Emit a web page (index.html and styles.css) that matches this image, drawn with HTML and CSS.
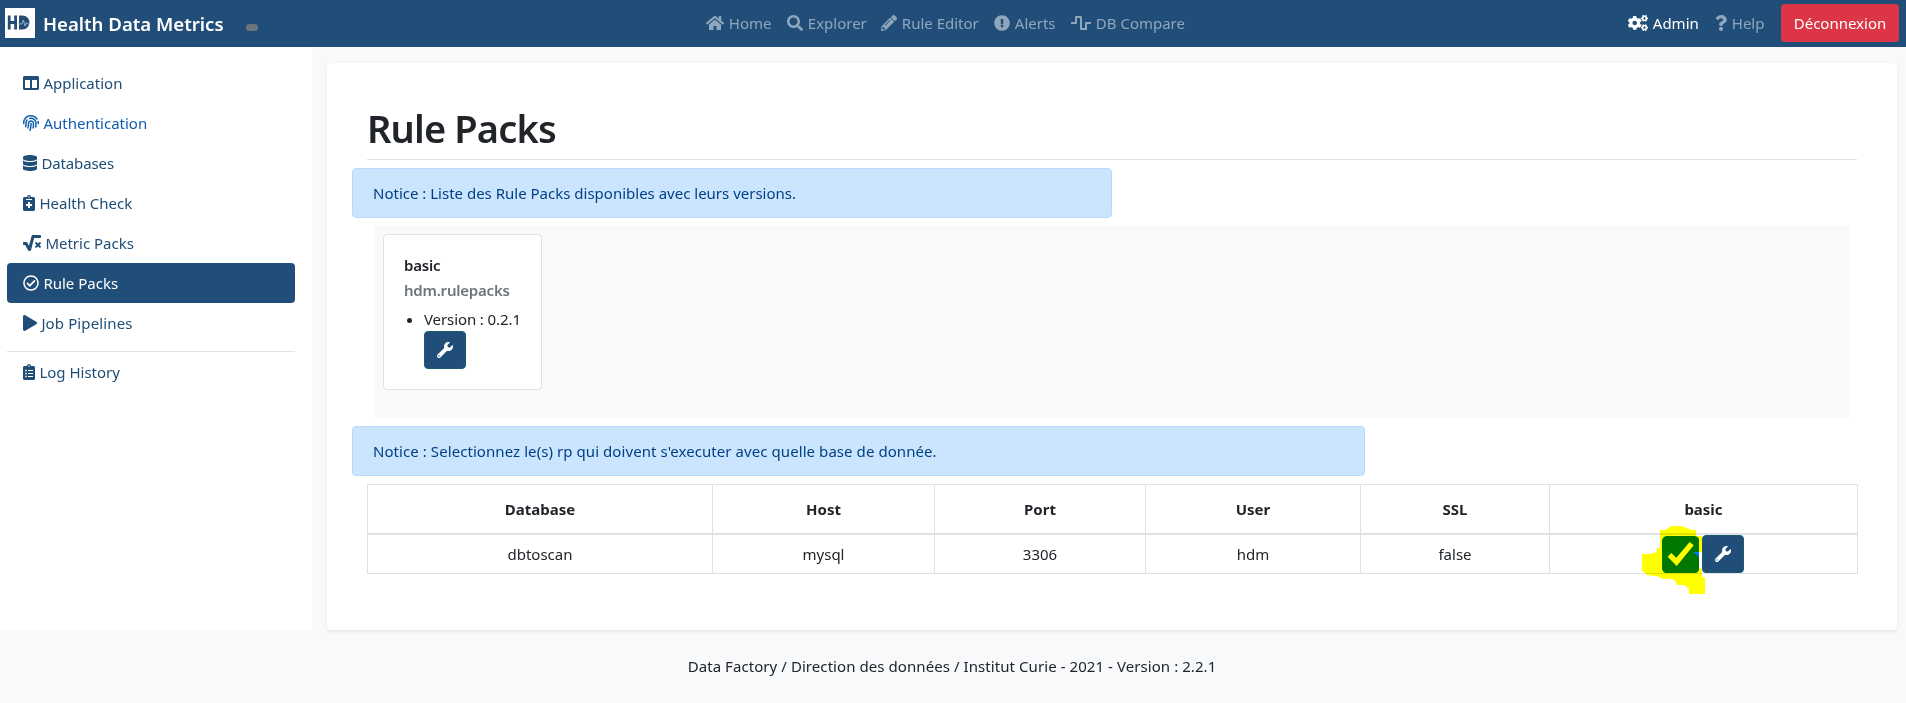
FILE: index.html
```html
<!DOCTYPE html>
<html lang="fr">
<head>
<meta charset="utf-8">
<title>Health Data Metrics</title>
<link rel="stylesheet" href="styles.css">
</head>
<body>
<header class="navbar">
  <div class="brand">
    <svg class="logo" viewBox="0 0 30 30"><rect width="30" height="30" fill="#fff"/><circle cx="17" cy="14.5" r="10.5" fill="none" stroke="#f3f4f6"/><path d="M4.200 7.500v14M10.600 7.500v14M4.200 14.500h6.400" fill="none" stroke="#274c72" stroke-width="2.800"/><path d="M14 7.500h3.500a7 7 0 0 1 0 14H14z" fill="#274c72"/><path d="M13 16h4l1.300-4 1.800 6 1.400-3.500 1.200 1.500h1.500" fill="none" stroke="#8fb0cc" stroke-width="1"/></svg>
    <span class="brand-name">Health Data Metrics</span>
    <span class="badge"></span>
  </div>
  <nav class="nav-main">
    <a class="nav-link w-home"><svg class="icon i18" viewBox="0 0 576 512"><path d="M280.37 148.26L96 300.11V464a16 16 0 0 0 16 16l112.06-.29a16 16 0 0 0 15.92-16V368a16 16 0 0 1 16-16h64a16 16 0 0 1 16 16v95.64a16 16 0 0 0 16 16.05L464 480a16 16 0 0 0 16-16V300L295.67 148.26a12.19 12.19 0 0 0-15.3 0zM571.6 251.47L488 182.56V44.05a12 12 0 0 0-12-12h-56a12 12 0 0 0-12 12v72.61L318.47 43a48 48 0 0 0-61 0L4.34 251.47a12 12 0 0 0-1.6 16.9l25.5 31A12 12 0 0 0 45.15 301l235.22-193.74a12.19 12.19 0 0 1 15.3 0L530.9 301a12 12 0 0 0 16.9-1.6l25.5-31a12 12 0 0 0-1.7-16.93z"/></svg><span>Home</span></a>
    <a class="nav-link w-explorer"><svg class="icon" viewBox="0 0 512 512"><path d="M505 442.7L405.3 343c-4.5-4.5-10.6-7-17-7H372c27.6-35.3 44-79.7 44-128C416 93.1 322.9 0 208 0S0 93.1 0 208s93.1 208 208 208c48.3 0 92.7-16.4 128-44v16.3c0 6.4 2.5 12.5 7 17l99.7 99.7c9.4 9.4 24.6 9.4 33.9 0l28.3-28.3c9.4-9.4 9.4-24.6.1-34zM208 336c-70.7 0-128-57.2-128-128 0-70.7 57.2-128 128-128 70.7 0 128 57.2 128 128 0 70.7-57.2 128-128 128z"/></svg><span>Explorer</span></a>
    <a class="nav-link w-rule"><svg class="icon" viewBox="0 0 512 512"><path d="M497.9 142.1l-46.1 46.1c-4.7 4.7-12.3 4.7-17 0l-111-111c-4.7-4.7-4.7-12.3 0-17l46.1-46.1c18.7-18.7 49.1-18.7 67.9 0l60.1 60.1c18.8 18.7 18.8 49.1 0 67.9zM284.2 99.8L21.6 362.4.4 483.9c-2.9 16.4 11.4 30.6 27.8 27.8l121.5-21.3 262.6-262.6c4.7-4.7 4.7-12.3 0-17l-111-111c-4.8-4.7-12.4-4.7-17.1 0zM124.1 339.9c-5.5-5.5-5.5-14.3 0-19.8l154-154c5.5-5.5 14.3-5.5 19.8 0s5.500 14.300 0 19.800l-154 154c-5.500 5.500-14.300 5.500-19.800 0zM88 424h48v36.300l-64.500 11.300-31.100-31.100L51.700 376H88v48z"/></svg><span>Rule Editor</span></a>
    <a class="nav-link w-alerts"><svg class="icon" viewBox="0 0 512 512"><path d="M504 256c0 136.997-111.043 248-248 248S8 392.997 8 256C8 119.083 119.043 8 256 8s248 111.083 248 248zm-248 50c-25.405 0-46 20.595-46 46s20.595 46 46 46 46-20.595 46-46-20.595-46-46-46zm-43.673-165.346l7.418 136c.347 6.364 5.609 11.346 11.982 11.346h48.546c6.373 0 11.635-4.982 11.982-11.346l7.418-136c.375-6.874-5.098-12.654-11.982-12.654h-63.383c-6.884 0-12.356 5.78-11.981 12.654z"/></svg><span>Alerts</span></a>
    <a class="nav-link w-compare"><svg class="icon i20" viewBox="0 0 640 512"><path d="M476 480H324a36 36 0 0 1-36-36V96h-96v156a36 36 0 0 1-36 36H16a16 16 0 0 1-16-16v-32a16 16 0 0 1 16-16h112V68a36 36 0 0 1 36-36h152a36 36 0 0 1 36 36v348h96V260a36 36 0 0 1 36-36h140a16 16 0 0 1 16 16v32a16 16 0 0 1-16 16H512v156a36 36 0 0 1-36 36z"/></svg><span>DB Compare</span></a>
  </nav>
  <div class="nav-right">
    <a class="nav-link active w-admin"><svg class="icon i20" viewBox="0 0 640 512"><defs><path id="cog" d="M512.1 191l-8.2 14.3c-3 5.3-9.4 7.5-15.1 5.4-11.8-4.4-22.6-10.7-32.1-18.6-4.6-3.8-5.8-10.5-2.8-15.7l8.2-14.3c-6.9-8-12.3-17.3-15.9-27.4h-16.5c-6 0-11.2-4.3-12.2-10.3-2-12-2.1-24.6 0-37.1 1-6 6.2-10.4 12.2-10.4h16.500c3.600-10.100 9-19.400 15.900-27.400l-8.200-14.300c-3-5.200-1.900-11.900 2.800-15.700 9.500-7.900 20.400-14.200 32.100-18.600 5.700-2.100 12.100.1 15.100 5.400l8.200 14.300c10.500-1.900 21.200-1.900 31.700 0L552 6.300c3-5.300 9.400-7.500 15.100-5.400 11.800 4.400 22.600 10.700 32.100 18.600 4.600 3.800 5.800 10.500 2.800 15.700l-8.200 14.300c6.900 8 12.300 17.300 15.900 27.400h16.500c6 0 11.200 4.300 12.200 10.300 2 12 2.100 24.600 0 37.100-1 6-6.200 10.400-12.200 10.400h-16.500c-3.600 10.100-9 19.400-15.900 27.400l8.200 14.300c3 5.200 1.900 11.900-2.800 15.700-9.500 7.900-20.400 14.200-32.100 18.600-5.700 2.100-12.100-.1-15.100-5.400l-8.200-14.300c-10.400 1.900-21.200 1.900-31.700 0zm-10.500-58.800c38.500 29.600 82.400-14.300 52.800-52.800-38.500-29.700-82.400 14.300-52.800 52.800z"/></defs><use href="#cog"/><use href="#cog" y="299"/><path d="M386.3 286.1l33.7 16.8c10.1 5.8 14.5 18.1 10.5 29.1-8.9 24.2-26.4 46.400-42.600 65.800-7.400 8.900-20.200 11.100-30.300 5.300l-29.100-16.800c-16 13.700-34.600 24.600-54.900 31.700v33.600c0 11.600-8.300 21.600-19.700 23.600-24.600 4.200-50.400 4.400-75.900 0-11.500-2-20-11.900-20-23.600V418c-20.300-7.200-38.900-18-54.900-31.700L74 403c-10 5.800-22.900 3.600-30.300-5.300-16.200-19.400-33.300-41.600-42.200-65.700-4-10.900.4-23.200 10.500-29.100l33.300-16.800c-3.900-20.900-3.900-42.400 0-63.400L12 205.800c-10.100-5.800-14.600-18.100-10.500-29 8.900-24.200 26-46.400 42.200-65.800 7.400-8.900 20.200-11.100 30.300-5.300l29.100 16.800c16-13.700 34.600-24.600 54.900-31.700V57.100c0-11.500 8.200-21.500 19.600-23.500 24.600-4.200 50.500-4.400 76-.1 11.500 2 20 11.900 20 23.600v33.600c20.300 7.200 38.900 18 54.900 31.700l29.100-16.800c10-5.800 22.900-3.600 30.300 5.300 16.200 19.400 33.200 41.600 42.100 65.800 4 10.900.1 23.200-10 29.100l-33.700 16.800c3.900 21 3.900 42.500 0 63.500zm-117.600 21.100c59.200-77-28.700-164.900-105.700-105.700-59.200 77 28.700 164.900 105.700 105.700z"/></svg><span>Admin</span></a>
    <a class="nav-link w-help"><svg class="icon i12" viewBox="0 0 384 512"><path d="M202.021 0C122.202 0 70.503 32.703 29.914 91.026c-7.363 10.58-5.093 25.086 5.178 32.874l43.138 32.709c10.373 7.865 25.132 6.026 33.253-4.148 25.049-31.381 43.63-49.449 82.757-49.449 30.764 0 68.816 19.799 68.816 49.631 0 22.552-18.617 34.134-48.993 51.164-35.423 19.86-82.299 44.576-82.299 106.405V320c0 13.255 10.745 24 24 24h72.471c13.255 0 24-10.745 24-24v-5.773c0-42.86 125.268-44.645 125.268-160.627C377.504 66.256 286.902 0 202.021 0zM192 373.459c-38.196 0-69.271 31.075-69.271 69.271 0 38.195 31.075 69.27 69.271 69.27s69.271-31.075 69.271-69.271-31.075-69.27-69.271-69.27z"/></svg><span>Help</span></a>
    <a class="btn-logout">Déconnexion</a>
  </div>
</header>
<div class="layout">
  <aside class="sidebar">
    <a class="side-link"><svg class="icon" viewBox="0 0 512 512"><path d="M464 32H48C21.49 32 0 53.49 0 80v352c0 26.51 21.49 48 48 48h416c26.51 0 48-21.49 48-48V80c0-26.51-21.49-48-48-48zM224 416H64V160h160v256zm224 0H288V160h160v256z"/></svg><span>Application</span></a>
    <a class="side-link hover"><svg class="icon" viewBox="0 0 512 512"><path d="M256.12 245.96c-13.25 0-24 10.74-24 24 1.14 72.25-8.14 141.9-27.7 211.55-2.73 9.72 2.15 30.49 23.12 30.49 10.48 0 20.11-6.92 23.09-17.52 13.53-47.91 31.04-125.41 29.48-224.52.01-13.25-10.73-24-23.99-24zm-.86-81.73C194 164.16 151.25 211.3 152.1 265.32c.75 47.94-3.75 95.91-13.37 142.55-2.69 12.98 5.67 25.69 18.64 28.36 13.05 2.67 25.67-5.66 28.36-18.64 10.34-50.09 15.17-101.58 14.37-153.02-.41-25.95 19.92-52.49 54.45-52.34 31.31.47 57.15 25.34 57.62 55.47.77 48.05-2.81 96.33-10.61 143.55-2.17 13.06 6.69 25.42 19.76 27.58 19.97 3.33 26.81-15.1 27.58-19.77 8.28-50.03 12.06-101.21 11.27-152.11-.88-55.8-47.94-101.88-104.91-102.72zm-110.69-19.78c-10.3-8.34-25.37-6.8-33.76 3.48-25.62 31.5-39.39 71.28-38.75 112 .59 37.58-2.47 75.27-9.11 112.05-2.34 13.05 6.31 25.53 19.36 27.89 20.11 3.5 27.07-14.81 27.89-19.36 7.19-39.84 10.5-80.66 9.86-121.33-.47-29.88 9.2-57.88 28-80.97 8.35-10.28 6.79-25.39-3.49-33.76zm109.47-62.33c-15.41-.41-30.87 1.44-45.78 4.97-12.89 3.06-20.87 15.98-17.83 28.89 3.06 12.89 16 20.83 28.89 17.83 11.05-2.61 22.47-3.77 34-3.69 75.43 1.13 137.73 61.5 138.88 134.58.59 37.88-1.28 76.11-5.58 113.63-1.5 13.17 7.95 25.08 21.11 26.58 16.72 1.95 25.51-11.88 26.58-21.11a929.06 929.06 0 0 0 5.89-119.85c-1.56-98.75-85.07-180.33-186.16-181.83zm252.07 121.45c-2.86-12.92-15.51-21.2-28.61-18.27-12.94 2.86-21.12 15.66-18.26 28.61 4.71 21.41 4.91 37.41 4.7 61.6-.11 13.27 10.55 24.09 23.8 24.2h.2c13.17 0 23.89-10.61 24-23.8.18-22.18.4-44.11-5.83-72.34zm-40.12-90.72C417.29 43.46 337.6 1.29 252.81.02 183.02-.82 118.47 24.91 70.46 72.94 24.09 119.37-.9 181.04.14 246.65l-.12 21.47c-.39 13.25 10.03 24.31 23.28 24.69.23.02.48.02.72.02 12.92 0 23.59-10.3 23.97-23.3l.16-23.64c-.83-52.5 19.16-101.86 56.28-139 38.76-38.8 91.34-59.67 147.68-58.86 69.45 1.03 134.73 35.56 174.62 92.39 7.61 10.86 22.56 13.45 33.42 5.86 10.84-7.62 13.46-22.59 5.84-33.43z"/></svg><span>Authentication</span></a>
    <a class="side-link"><svg class="icon i14" viewBox="0 0 448 512"><path d="M448 73.143v45.714C448 159.143 347.667 192 224 192S0 159.143 0 118.857V73.143C0 32.857 100.333 0 224 0s224 32.857 224 73.143zM448 176v102.857C448 319.143 347.667 352 224 352S0 319.143 0 278.857V176c48.125 33.143 136.208 48.572 224 48.572S399.874 209.143 448 176zm0 160v102.857C448 479.143 347.667 512 224 512S0 479.143 0 438.857V336c48.125 33.143 136.208 48.572 224 48.572S399.874 369.143 448 336z"/></svg><span class="t-db">Databases</span></a>
    <a class="side-link"><svg class="icon i12" viewBox="0 0 384 512"><path d="M336 64h-80c0-35.3-28.7-64-64-64s-64 28.7-64 64H48C21.5 64 0 85.5 0 112v352c0 26.5 21.5 48 48 48h288c26.5 0 48-21.5 48-48V112c0-26.5-21.5-48-48-48zM192 40c13.3 0 24 10.7 24 24s-10.700 24-24 24-24-10.700-24-24 10.700-24 24-24zm96 304c0 4.400-3.600 8-8 8h-56v56c0 4.400-3.600 8-8 8h-48c-4.400 0-8-3.600-8-8v-56h-56c-4.400 0-8-3.600-8-8v-48c0-4.400 3.600-8 8-8h56v-56c0-4.400 3.600-8 8-8h48c4.400 0 8 3.600 8 8v56h56c4.400 0 8 3.600 8 8v48zm0-192c0 4.400-3.600 8-8 8H104c-4.400 0-8-3.600-8-8v-16c0-4.400 3.600-8 8-8h176c4.400 0 8 3.600 8 8v16z"/></svg><span>Health Check</span></a>
    <a class="side-link"><svg class="icon i18" viewBox="0 0 576 512"><path d="M571.31 251.31l-22.62-22.62c-6.25-6.25-16.38-6.25-22.63 0L480 274.75l-46.06-46.06c-6.25-6.25-16.38-6.25-22.63 0l-22.62 22.62c-6.25 6.25-6.25 16.38 0 22.63L434.75 320l-46.06 46.06c-6.25 6.25-6.25 16.38 0 22.63l22.62 22.62c6.25 6.25 16.38 6.25 22.63 0L480 365.25l46.06 46.06c6.25 6.25 16.38 6.25 22.63 0l22.62-22.62c6.25-6.25 6.25-16.38 0-22.63L525.25 320l46.06-46.06c6.25-6.25 6.25-16.38 0-22.63zM552 0H307.65c-14.54 0-27.26 9.8-30.95 23.87l-84.79 322.8-58.41-106.1A32.008 32.008 0 0 0 105.47 224H24c-13.25 0-24 10.74-24 24v48c0 13.25 10.75 24 24 24h43.62l88.88 163.73C168.99 503.5 186.3 512 204.94 512c17.27 0 44.44-9 54.28-41.48L357.03 96H552c13.25 0 24-10.75 24-24V24c0-13.26-10.75-24-24-24z"/></svg><span>Metric Packs</span></a>
    <a class="side-link active"><svg class="icon" viewBox="0 0 512 512"><path d="M256 8C119.033 8 8 119.033 8 256s111.033 248 248 248 248-111.033 248-248S392.967 8 256 8zm0 48c110.532 0 200 89.451 200 200 0 110.532-89.451 200-200 200-110.532 0-200-89.451-200-200 0-110.532 89.451-200 200-200m140.204 130.267l-22.536-22.718c-4.667-4.705-12.265-4.736-16.97-.068L215.346 303.697l-59.792-60.277c-4.667-4.705-12.265-4.736-16.97-.069l-22.719 22.536c-4.705 4.667-4.736 12.265-.068 16.971l90.781 91.516c4.667 4.705 12.265 4.736 16.97.068l172.589-171.204c4.704-4.668 4.734-12.266.067-16.971z"/></svg><span>Rule Packs</span></a>
    <a class="side-link"><svg class="icon i14" viewBox="0 0 448 512"><path d="M424.4 214.7L72.4 6.6C43.8-10.3 0 6.1 0 47.9V464c0 37.5 40.7 60.1 72.4 41.3l352-208c31.4-18.5 31.5-64.1 0-82.6z"/></svg><span class="t-job">Job Pipelines</span></a>
    <div class="divider"></div>
    <a class="side-link"><svg class="icon i12" viewBox="0 0 384 512"><path fill-rule="evenodd" d="M336 64h-80c0-35.3-28.7-64-64-64s-64 28.7-64 64H48C21.5 64 0 85.5 0 112v352c0 26.5 21.5 48 48 48h288c26.5 0 48-21.5 48-48V112c0-26.500-21.500-48-48-48zM192 40c13.300 0 24 10.700 24 24s-10.700 24-24 24-24-10.700-24-24 10.700-24 24-24zM72 184h48v48H72zM72 280h48v48H72zM72 376h48v48H72zM160 192h160v32H160zM160 288h160v32H160zM160 384h160v32H160z"/></svg><span>Log History</span></a>
  </aside>
  <main class="panel">
    <h1 class="title"><span>Rule Packs</span></h1>
    <div class="alert alert-packs"><span>Notice : Liste des Rule Packs disponibles avec leurs versions.</span></div>
    <section class="packs">
      <article class="pack">
        <h5 class="pack-name">basic</h5>
        <h6 class="pack-module">hdm.rulepacks</h6>
        <ul class="versions"><li><span class="version">Version : 0.2.1</span><a class="btn-tool"><svg class="icon" viewBox="0 0 512 512"><path id="wrench" d="M507.73 109.1c-2.24-9.03-13.54-12.09-20.12-5.51l-74.36 74.36-67.88-11.31-11.31-67.88 74.36-74.36c6.62-6.62 3.43-17.9-5.66-20.16-47.38-11.74-99.55.91-136.58 37.93-39.64 39.64-50.55 97.1-34.05 147.2L18.74 402.76c-24.99 24.99-24.99 65.51 0 90.5 24.99 24.99 65.51 24.99 90.5 0l213.21-213.21c50.12 16.71 107.47 5.68 147.37-34.22 37.07-37.07 49.7-89.32 37.91-136.73zM64 472c-13.25 0-24-10.75-24-24 0-13.26 10.75-24 24-24s24 10.74 24 24c0 13.25-10.75 24-24 24z"/></svg></a></li></ul>
      </article>
    </section>
    <div class="alert alert-db"><span>Notice : Selectionnez le(s) rp qui doivent s'executer avec quelle base de donnée.</span></div>
    <table class="grid">
      <colgroup><col class="c1"><col class="c2"><col class="c3"><col class="c4"><col class="c5"><col class="c6"></colgroup>
      <thead><tr><th>Database</th><th>Host</th><th>Port</th><th>User</th><th>SSL</th><th>basic</th></tr></thead>
      <tbody><tr><td>dbtoscan</td><td>mysql</td><td>3306</td><td>hdm</td><td>false</td>
        <td class="actions"><div class="action-row">
          <svg class="check" viewBox="0 0 37.300 37.300"><rect width="37.300" height="37.300" rx="5" fill="#0078ff"/><path d="M5.700 20.700L9.300 17l5 4.700L27.700 6l4 3.300L14.700 30z" fill="#fff"/></svg>
          <a class="btn-tool"><svg class="icon" viewBox="0 0 512 512"><use href="#wrench"/></svg></a>
          <svg class="marker" viewBox="426 198 189 204"><path d="M426 282h24l21-6v-12l9-2v-52h15l20-12h30l30 12h13v18h18v48h-26l7 7 7 4 3 7v31l9 3v24h9v50h-48v-14l-14-13h-20l-13-17-33-2-17-8-27-2-17-14z" fill="#ff0"/></svg>
        </div></td></tr></tbody>
    </table>
  </main>
</div>
<footer class="footer"><span>Data Factory / Direction des données / Institut Curie - 2021 - Version : 2.2.1</span></footer>
</body>
</html>
```
FILE: styles.css
```css
* { box-sizing: border-box; }
body {
  margin: 0;
  background: #f8f9fb;
  color: #212529;
  font: 400 15px/24px "Noto Sans", "Open Sans", sans-serif;
}
.icon { width: 16px; height: 16px; flex: none; fill: currentColor; }
.i12 { width: 12px; }
.i14 { width: 14px; }
.i18 { width: 18px; }
.i20 { width: 20px; }

.navbar {
  display: grid;
  grid-template-columns: 698px 495px 1fr;
  align-items: center;
  height: 47px;
  background: #204e78;
}
.brand { display: flex; align-items: center; padding-left: 5px; height: 47px; }
.logo { width: 30px; height: 30px; margin: 0 8px 1px 0; }
.brand-name { width: 203px; color: #fff; font-size: 18.600px; font-weight: 600; white-space: nowrap; }
.badge { width: 12px; height: 7px; margin-top: 8px; border-radius: 3.500px; background: #6c757d; }
.nav-main, .nav-right { display: flex; align-items: center; }
.nav-main { padding-bottom: 1px; }
.nav-link { display: flex; align-items: center; gap: 4.800px; padding: 0 0 0 8px; color: #8fa7bc; white-space: nowrap; }
.nav-link.active { color: #fff; }
.w-home { width: 81px; }
.w-explorer { width: 94px; }
.w-rule { width: 113px; }
.w-alerts { width: 77px; }
.w-compare { width: 130px; }
.nav-right { justify-content: flex-end; padding: 0 7px 1px 0; height: 47px; }
.w-admin { width: 87px; }
.w-help { width: 74px; }
.btn-logout {
  width: 118px;
  height: 38px;
  border-radius: 4px;
  background: #dc3545;
  color: #fff;
  line-height: 38px;
  text-align: center;
}

.layout { display: grid; grid-template-columns: 312px 1570px; column-gap: 15px; height: 583px; }
.sidebar { padding: 16px 17px 0 7px; background: #fff; }
.side-link { display: flex; align-items: center; gap: 4.400px; height: 40px; padding-left: 16px; border-radius: 4px; color: #204e78; }
.side-link.hover { color: #0f5cb0; }
.side-link.active { background: #204e78; color: #fff; }
.t-db { letter-spacing: -.12px; }
.t-job { letter-spacing: .12px; }
.divider { height: 1px; margin: 8px 0 0; background: #dfe2e5; }

.panel {
  margin-top: 16px;
  padding: 41px 40px 0;
  border-radius: 4px;
  background: #fff;
  box-shadow: 0 2px 4px rgba(0, 0, 0, .075);
}
.title { height: 56px; margin: 0 0 8px; border-bottom: 1px solid #dee2e6; font-size: 38px; font-weight: 600; letter-spacing: -.85px; line-height: 48px; }
.alert {
  height: 50px;
  margin-left: -15px;
  padding: 0 20px;
  border: 1px solid #b8daff;
  border-radius: 4px;
  background: #cce5ff;
  color: #004085;
  line-height: 49px;
  white-space: nowrap;
}
.alert-packs { width: 760px; }
.alert-db { width: 1013px; letter-spacing: .07px; }
.packs { height: 192px; margin: 8px; padding: 8px; background: #f9f9f9; }
.pack { width: 159px; height: 156px; padding: 18px 20px; border: 1px solid #dfdfdf; border-radius: 4px; background: #fff; }
.pack-name, .pack-module { margin: 0; font-size: 15px; font-weight: 600; letter-spacing: -.22px; line-height: 24px; }
.pack-module { margin-top: 1px; color: #6c757d; }
.versions { margin: 5px 0 0; padding-left: 20px; }
.version { display: block; letter-spacing: -.1px; white-space: nowrap; }
.btn-tool {
  display: flex;
  align-items: center;
  justify-content: center;
  width: 42px;
  height: 38px;
  border: 1px solid #1c5a70;
  border-radius: 4px;
  background: #204e78;
  color: #fff;
}

.grid { width: 1490px; margin-top: 8px; border-collapse: collapse; table-layout: fixed; text-align: center; }
.grid th, .grid td { padding: 0; border: 1px solid #dee2e6; }
.grid th { height: 49px; border-bottom-width: 2px; font-weight: 700; }
.grid td { height: 39px; }
.c1 { width: 345px; }
.c2 { width: 222px; }
.c3 { width: 211px; }
.c4 { width: 215px; }
.c5 { width: 189px; }
.c6 { width: 308px; }
.action-row { position: relative; display: flex; justify-content: center; width: 82px; height: 38px; margin: 0 auto; }
.check { width: 37.300px; height: 37.300px; margin: 1px 2.700px 0 -1px; flex: none; }
.action-row .btn-tool { flex: none; }
.marker { position: absolute; left: -20.500px; top: -9px; width: 63px; height: 68px; mix-blend-mode: multiply; }

.footer { padding: 24px 2px 0 0; letter-spacing: .07px; text-align: center; }
```
